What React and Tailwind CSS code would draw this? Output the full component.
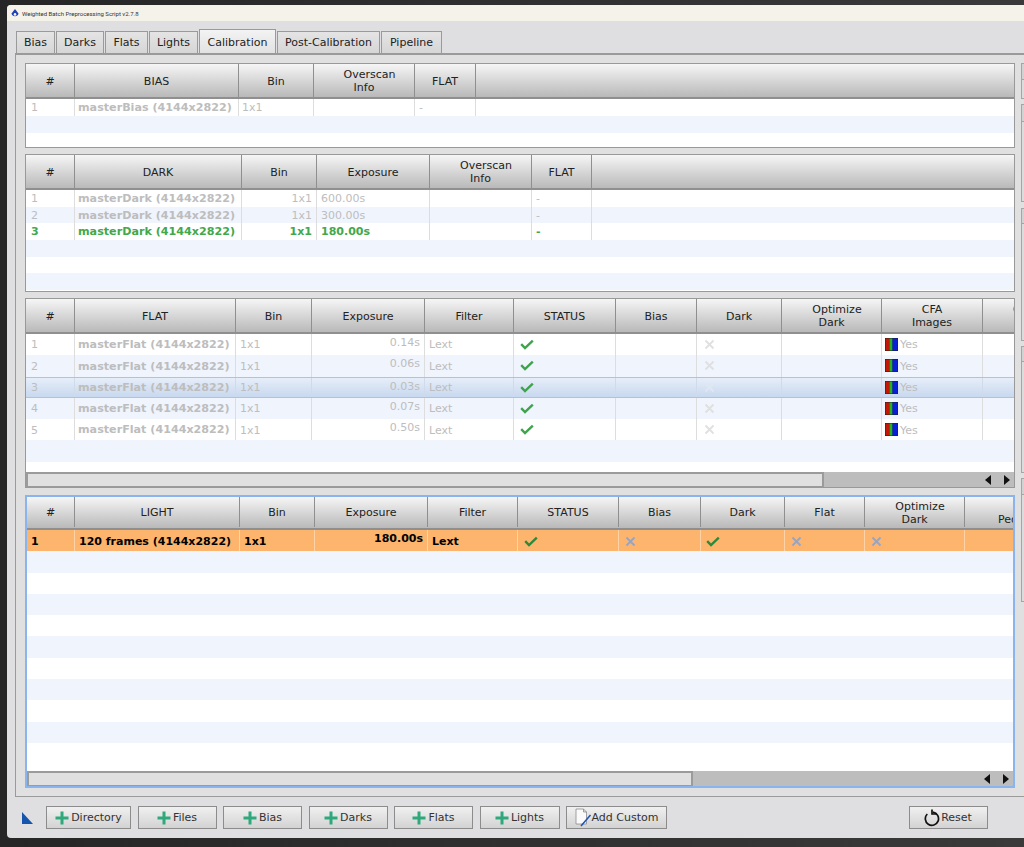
import React from 'react';

const dim = 'text-[#bdbdbd]';

function Check({ className = 'stroke-[#3fa34d]' }) {
  return (
    <svg width="14" height="11" viewBox="0 0 14 11" className="shrink-0">
      <path d="M1.2 5.2 L5 9 L12.8 1.6" fill="none" strokeWidth="2.4" className={className} />
    </svg>
  );
}

function Cross({ className = 'stroke-[#e0e0e0]' }) {
  return (
    <svg width="11" height="11" viewBox="0 0 11 11" className="shrink-0">
      <path d="M1.5 1.5 L9.5 9.5 M9.5 1.5 L1.5 9.5" fill="none" strokeWidth="1.8" className={className} />
    </svg>
  );
}

function Cfa() {
  return (
    <svg width="13" height="13" viewBox="0 0 13 13" className="shrink-0">
      <rect x="0" y="0" width="13" height="13" fill="#222" />
      <rect x="0.5" y="0.5" width="4" height="12" fill="#c21807" />
      <rect x="4.5" y="0.5" width="3" height="12" fill="#22b322" />
      <rect x="7.5" y="0.5" width="5" height="12" fill="#0a1fd6" />
    </svg>
  );
}

function Plus() {
  return (
    <svg width="14" height="14" viewBox="0 0 14 14" className="shrink-0">
      <path d="M7 0.5 V13.5 M0.5 7 H13.5" stroke="#2fa97c" strokeWidth="3" fill="none" />
    </svg>
  );
}

function Caret({ dir }) {
  return (
    <svg width="6" height="10" viewBox="0 0 6 10">
      <path d={dir === 'left' ? 'M6 0 V10 L0 5 Z' : 'M0 0 V10 L6 5 Z'} fill="#111" />
    </svg>
  );
}

// One header label, first line may sit right of centre like in the original
function HeadLabel({ col }) {
  return (
    <div className={`flex flex-col items-center leading-[13px] whitespace-nowrap pt-[1px] ${col.hc || ''}`}>
      {col.label.split('\n').map((line, i) => (
        <span key={i} className={`min-h-[13px] ${i === 0 ? col.first || '' : ''}`}>{line}</span>
      ))}
    </div>
  );
}

function Row({ cols, cells, className, line, rowH, cellText }) {
  return (
    <div className={`flex shrink-0 ${rowH} ${className}`}>
      {cols.map((col, i) => {
        const c = cells[i];
        if (col.rest) return <div key={i} className="flex-1" />;
        return (
          <div key={i} className={`${col.w} shrink-0 border-r ${line} flex items-center overflow-hidden whitespace-nowrap ${cellText} ${c && c.cls ? c.cls : 'pl-1'}`}>
            {c && c.node}
            {c && c.text && <span className={c.span ?? 'pt-[2px]'}>{c.text}</span>}
          </div>
        );
      })}
    </div>
  );
}

function Scrollbar({ thumb }) {
  return (
    <div className="h-[15px] shrink-0 bg-[#bdbdbd] flex items-stretch">
      <div className={`${thumb} bg-[#e0e0e0] border-t-2 border-l-2 border-r-2 border-b border-[#9b9b9b]`} />
      <div className="flex-1 flex items-center justify-end gap-[13px] pr-[4px]">
        <Caret dir="left" />
        <Caret dir="right" />
      </div>
    </div>
  );
}

function Table({ box, head = 'h-[35px]', cols, rows, rowH, stripes, thumb }) {
  return (
    <div className={`flex flex-col overflow-hidden bg-white shrink-0 ${box}`}>
      <div className={`flex ${head} shrink-0 border-b-2 border-[#8f8f8f] bg-gradient-to-b from-[#f6f6f6] to-[#b9b9b9] text-[#222]`}>
        {cols.map((col, i) => (
          <div key={i} className={`${col.rest ? 'flex-1 min-w-0' : `${col.w} shrink-0 border-r border-[#8f8f8f]`} flex items-center justify-center ${col.hc2 || ''}`}>
            {col.label && <HeadLabel col={col} />}
          </div>
        ))}
      </div>
      <div className="flex-1 min-h-0 overflow-hidden flex flex-col">
        {rows.map((r, i) => (
          <Row key={i} cols={cols} cells={r.cells} rowH={rowH} className={r.bg} line={r.line || 'border-[#dddddd]'} cellText={r.text} />
        ))}
        {stripes.map((bg, i) => (
          <div key={i} className={`${rowH} shrink-0 ${bg}`} />
        ))}
      </div>
      {thumb && <Scrollbar thumb={thumb} />}
    </div>
  );
}

const WHITE = 'bg-white';
const BLUE = 'bg-[#eff4fd]';
const num = (text) => ({ text, cls: 'pl-[5px]' });
const bold = (text) => ({ text, span: 'font-bold text-[11.15px] pt-[2px]', cls: 'pl-[3px]' });
const txt = (text) => ({ text });
const orange = (text, cls = 'pl-1') => ({ text, cls, span: 'pt-[4px]' });

const biasCols = [
  { w: 'w-[49px]', label: '#' },
  { w: 'w-[164px]', label: 'BIAS' },
  { w: 'w-[75px]', label: 'Bin' },
  { w: 'w-[101px]', label: 'Overscan\nInfo', first: 'pl-[11px]' },
  { w: 'w-[61px]', label: 'FLAT' },
  { rest: true },
];

const darkCols = [
  { w: 'w-[49px]', label: '#' },
  { w: 'w-[167px]', label: 'DARK' },
  { w: 'w-[75px]', label: 'Bin' },
  { w: 'w-[113px]', label: 'Exposure' },
  { w: 'w-[102px]', label: 'Overscan\nInfo', first: 'pl-[11px]' },
  { w: 'w-[60px]', label: 'FLAT' },
  { rest: true },
];

const flatCols = [
  { w: 'w-[49px]', label: '#' },
  { w: 'w-[161px]', label: 'FLAT' },
  { w: 'w-[76px]', label: 'Bin' },
  { w: 'w-[113px]', label: 'Exposure' },
  { w: 'w-[89px]', label: 'Filter' },
  { w: 'w-[102px]', label: 'STATUS' },
  { w: 'w-[81px]', label: 'Bias' },
  { w: 'w-[85px]', label: 'Dark' },
  { w: 'w-[100px]', label: 'Optimize\nDark', first: 'pl-[11px]' },
  { w: 'w-[101px]', label: 'CFA\nImages' },
  { w: 'w-[40px]', label: 'Calibrate\n', hc: 'items-start pl-[30px]', hc2: 'justify-start' },
];

const lightCols = [
  { w: 'w-[48px]', label: '#' },
  { w: 'w-[165px]', label: 'LIGHT' },
  { w: 'w-[75px]', label: 'Bin' },
  { w: 'w-[113px]', label: 'Exposure' },
  { w: 'w-[90px]', label: 'Filter' },
  { w: 'w-[101px]', label: 'STATUS' },
  { w: 'w-[82px]', label: 'Bias' },
  { w: 'w-[84px]', label: 'Dark' },
  { w: 'w-[80px]', label: 'Flat' },
  { w: 'w-[100px]', label: 'Optimize\nDark', first: 'pl-[11px]' },
  { w: 'w-[60px]', label: '\nPedestal', hc: 'items-start pl-[33px]', hc2: 'justify-start' },
];

const darkRow = (n, exp, bg, text, line) => ({
  bg,
  text,
  line,
  cells: [
    num(n),
    bold('masterDark (4144x2822)'),
    { text: '1x1', cls: 'justify-end pr-[4px]' },
    { text: exp, cls: 'pl-[4px]' },
    {},
    { text: '-', cls: 'pl-[4px]' },
  ],
});

const flatRow = (n, exp, bg, crossCls, line) => ({
  bg,
  text: dim,
  line,
  cells: [
    num(n),
    bold('masterFlat (4144x2822)'),
    txt('1x1'),
    { text: exp, span: '', cls: 'justify-end items-start pr-[4px] pt-[1px]' },
    txt('Lext'),
    { node: <Check />, cls: 'pl-[6px]' },
    {},
    { node: <Cross className={crossCls} />, cls: 'pl-[7px]' },
    {},
    { node: <Cfa />, text: 'Yes', cls: 'pl-[3px] gap-[2px]' },
    {},
  ],
});

const greyX = 'stroke-[#9aa3bd]';
const greenDark = 'stroke-[#2c8a3c]';

const lightRow = {
  bg: 'bg-[#fdb46c]',
  text: 'text-black font-bold',
  line: 'border-[#ffd3a6]',
  cells: [
    orange('1', 'pl-[4px]'),
    orange('120 frames (4144x2822)'),
    orange('1x1'),
    { text: '180.00s', span: '', cls: 'justify-end items-start pr-[4px] pt-[1px]' },
    orange('Lext'),
    { node: <Check className={greenDark} />, cls: 'pl-[6px] pt-[2px]' },
    { node: <Cross className={greyX} />, cls: 'pl-[6px] pt-[2px]' },
    { node: <Check className={greenDark} />, cls: 'pl-[5px] pt-[2px]' },
    { node: <Cross className={greyX} />, cls: 'pl-[6px] pt-[2px]' },
    { node: <Cross className={greyX} />, cls: 'pl-[6px] pt-[2px]' },
    {},
  ],
};

const tabs = [
  { name: 'Bias', w: 'w-[39px]' },
  { name: 'Darks', w: 'w-[48px]' },
  { name: 'Flats', w: 'w-[43px]' },
  { name: 'Lights', w: 'w-[49px]' },
  { name: 'Calibration', w: 'w-[77px]', active: true },
  { name: 'Post-Calibration', w: 'w-[103px]' },
  { name: 'Pipeline', w: 'w-[61px]' },
];

const buttons = [
  { name: 'Directory', w: 'w-[85px]' },
  { name: 'Files', w: 'w-[79px]' },
  { name: 'Bias', w: 'w-[79px]' },
  { name: 'Darks', w: 'w-[79px]' },
  { name: 'Flats', w: 'w-[79px]' },
  { name: 'Lights', w: 'w-[80px]' },
];

const btn = 'h-[23px] shrink-0 flex items-center justify-center border border-[#8c8c8c] bg-gradient-to-b from-[#f0f0f0] to-[#d3d3d3] text-[#333]';

// Collapsed sections on the far right of the pane
const sideBoxes = [
  { h: 'h-[36px]', head: 'h-[16px]', mb: 'mb-[5px]' },
  { h: 'h-[98px]', head: 'h-[17px]', mb: 'mb-[6px]' },
  { h: 'h-[133px]', head: 'h-[15px]', mb: 'mb-[5px]' },
  { h: 'h-[127px]', head: 'h-[15px]', mb: 'mb-[5px]' },
  { h: 'h-[124px]', head: 'h-[16px]', mb: 'mb-0' },
];

export default function App() {
  return (
    <div className="w-[1024px] h-[847px] overflow-hidden bg-gradient-to-r from-[#262626] to-[#3a3a3a] pl-[7px] pt-[5px] text-[11px] font-['DejaVu_Sans',sans-serif]">
      <div className="w-[1030px] h-[833px] rounded-[4px] bg-[#dfdfe1] overflow-hidden flex flex-col">
        {/* Title bar */}
        <div className="h-[16px] shrink-0 bg-[#f5f2ea] flex items-center pl-[4px] gap-[3px] text-[#333] text-[6px] font-['Roboto',sans-serif]">
          <svg width="8" height="9" viewBox="0 0 8 9" className="shrink-0">
            <path d="M4 0 L7.5 4.5 A3.6 3.6 0 0 1 0.5 4.5 Z" fill="#1d3fb8" />
            <circle cx="4" cy="5.4" r="1.3" fill="#f4f4f4" />
          </svg>
          <span>Weighted Batch Preprocessing Script v2.7.8</span>
        </div>

        <div className="flex-1 flex flex-col pl-[8px]">
          {/* Tabs */}
          <div className="flex h-[32px] shrink-0 items-end gap-[1px] pl-[1px]">
            {tabs.map((t) => (
              <div
                key={t.name}
                className={`${t.w} flex items-center justify-center border border-b-0 border-[#9a9a9a] text-[#222] ${t.active ? 'h-[24px] pt-[3px] bg-gradient-to-b from-[#f3f3f3] to-[#e2e2e2]' : 'h-[22px] pt-[1px] bg-gradient-to-b from-[#e4e4e4] to-[#d6d6d6]'}`}
              >
                {t.name}
              </div>
            ))}
          </div>

          {/* Tab pane */}
          <div className="h-[744px] shrink-0 border-t-2 border-l border-b border-[#9a9a9a] bg-[#e0e0e0] flex pt-[8px] pl-[9px]">
            <div className="w-[990px] shrink-0 flex flex-col">
              <Table
                box="h-[85px] border border-[#999999]"
                cols={biasCols}
                rowH="h-[17px]"
                rows={[{
                  bg: WHITE,
                  text: dim,
                  cells: [num('1'), bold('masterBias (4144x2822)'), { text: '1x1', cls: 'pl-[3px]' }, {}, txt('-')],
                }]}
                stripes={[BLUE, WHITE, BLUE]}
              />
              <Table
                box="mt-[6px] h-[138px] border border-[#999999]"
                cols={darkCols}
                rowH="h-[16.7px]"
                rows={[
                  darkRow('1', '600.00s', WHITE, dim),
                  darkRow('2', '300.00s', BLUE, dim),
                  darkRow('3', '180.00s', WHITE, 'text-[#41a84b] font-bold'),
                ]}
                stripes={[BLUE, WHITE, BLUE]}
              />
              <Table
                box="mt-[6px] h-[190px] border border-[#999999]"
                cols={flatCols}
                rowH="h-[21.3px]"
                thumb="w-[798px]"
                rows={[
                  flatRow('1', '0.14s', WHITE),
                  flatRow('2', '0.06s', BLUE),
                  flatRow('3', '0.03s', 'bg-gradient-to-b from-[#e6eef9] to-[#c8d8ef] border-y border-[#b4c2d8]', 'stroke-[#dfe7f3]', 'border-[#cfdbeb]'),
                  flatRow('4', '0.07s', BLUE),
                  flatRow('5', '0.50s', WHITE),
                ]}
                stripes={[BLUE, WHITE]}
              />
              <Table
                box="mt-[7px] h-[293px] border-2 border-[#8ab4ee]"
                head="h-[33px] pb-[1px]"
                cols={lightCols}
                rowH="h-[21.3px]"
                thumb="w-[666px]"
                rows={[lightRow]}
                stripes={[BLUE, WHITE, BLUE, WHITE, BLUE, WHITE, BLUE, WHITE, BLUE, WHITE]}
              />
            </div>

            <div className="ml-[6px] w-[12px] shrink-0 flex flex-col">
              {sideBoxes.map((b, i) => (
                <div key={i} className={`${b.h} ${b.mb} shrink-0 border border-[#a5a5a5] bg-[#dcdcdc]`}>
                  <div className={`${b.head} border-b border-[#a5a5a5] bg-[#d2d2d2]`} />
                </div>
              ))}
            </div>
          </div>

          {/* Bottom buttons */}
          <div className="flex-1 flex items-start pt-[9px] pl-[7px] gap-[6.5px]">
            <svg width="11" height="12" viewBox="0 0 11 12" className="shrink-0 mt-[6px] mr-[6.5px]">
              <path d="M0 0 V12 H11 Z" fill="#1456ae" />
            </svg>
            {buttons.map((b) => (
              <div key={b.name} className={`${b.w} ${btn} gap-[2px]`}>
                <Plus />
                <span className="pt-[1px]">{b.name}</span>
              </div>
            ))}
            <div className={`w-[101px] ${btn}`}>
              <svg width="17" height="19" viewBox="0 0 17 19" className="shrink-0">
                <path d="M1 1 H8.5 L11.5 4 V16 H1 Z M8.5 1 V4 H11.5" fill="#fafafa" stroke="#8a8a8a" strokeWidth="0.8" />
                <path d="M6 18 L15.5 7" stroke="#1b54b5" strokeWidth="1.5" fill="none" />
              </svg>
              <span className="pt-[1px]">Add Custom</span>
            </div>
            <div className={`w-[79px] ${btn} ml-[235px] gap-[1px]`}>
              <svg width="16" height="18" viewBox="0 0 16 18" className="shrink-0">
                <path d="M3.3 5 A6.6 6.6 0 1 0 9 3.2" fill="none" stroke="#111" strokeWidth="1.7" />
                <path d="M8 0.5 V5 H13" fill="none" stroke="#111" strokeWidth="1.7" />
              </svg>
              <span className="pt-[1px]">Reset</span>
            </div>
          </div>
        </div>
      </div>
    </div>
  );
}
